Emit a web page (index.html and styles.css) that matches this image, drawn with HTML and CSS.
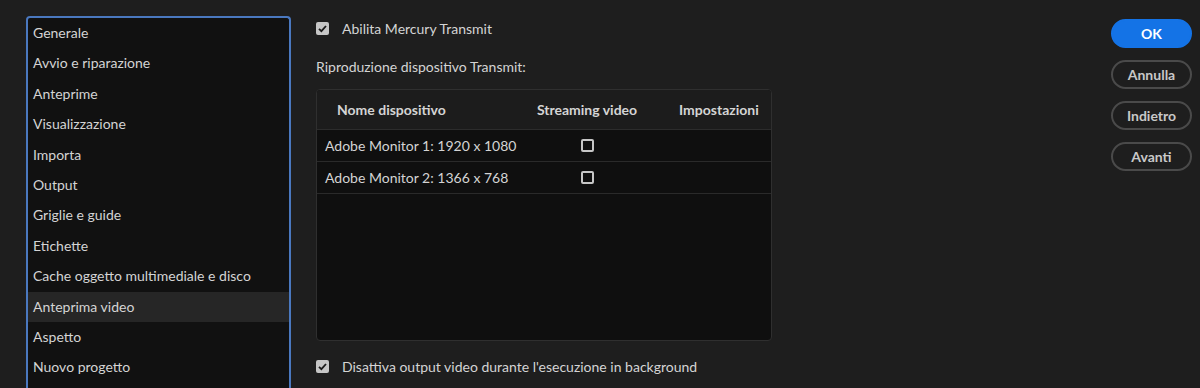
FILE: index.html
```html
<!DOCTYPE html>
<html lang="it">
<head>
    <meta charset="UTF-8">
    <title>Preferenze - Anteprima video</title>

    <link rel="stylesheet" href="styles.css">

</head>
<body>
<div class="dialog">
    <div class="sidebar">
        <div class="item">Generale</div>
        <div class="item">Avvio e riparazione</div>
        <div class="item">Anteprime</div>
        <div class="item">Visualizzazione</div>
        <div class="item">Importa</div>
        <div class="item">Output</div>
        <div class="item">Griglie e guide</div>
        <div class="item">Etichette</div>
        <div class="item">Cache oggetto multimediale e disco</div>
        <div class="item selected">Anteprima video</div>
        <div class="item">Aspetto</div>
        <div class="item">Nuovo progetto</div>
    </div>

    <div class="content">
        <label class="check-row top">
            <span class="checkbox checked">
                <svg viewBox="0 0 13 13" width="13" height="13"><path d="M3 6.8 L5.4 9.2 L10 4" fill="none" stroke="#1a1a1a" stroke-width="1.8"/></svg>
            </span>
            Abilita Mercury Transmit
        </label>

        <div class="section-label">Riproduzione dispositivo Transmit:</div>

        <div class="table">
            <div class="row head">
                <div class="col-name">Nome dispositivo</div>
                <div class="col-stream">Streaming video</div>
                <div class="col-set">Impostazioni</div>
            </div>
            <div class="row">
                <div class="col-name">Adobe Monitor 1: 1920 x 1080</div>
                <div class="col-stream"><span class="checkbox"></span></div>
                <div class="col-set"></div>
            </div>
            <div class="row">
                <div class="col-name">Adobe Monitor 2: 1366 x 768</div>
                <div class="col-stream"><span class="checkbox"></span></div>
                <div class="col-set"></div>
            </div>
        </div>

        <label class="check-row bottom">
            <span class="checkbox checked">
                <svg viewBox="0 0 13 13" width="13" height="13"><path d="M3 6.8 L5.4 9.2 L10 4" fill="none" stroke="#1a1a1a" stroke-width="1.8"/></svg>
            </span>
            Disattiva output video durante l'esecuzione in background
        </label>
    </div>

    <div class="buttons">
        <button class="btn primary">OK</button>
        <button class="btn">Annulla</button>
        <button class="btn">Indietro</button>
        <button class="btn">Avanti</button>
    </div>
</div>
</body>
</html>
```

FILE: styles.css
```css
* {
    box-sizing: border-box;
}

html, body {
    margin: 0;
    height: 100%;
    overflow: hidden;
}

body {
    background-color: #1e1e1e;
    color: #d4d4d4;
    font-family: Lato, "Open Sans", sans-serif;
    font-size: 14px;
}

.dialog {
    display: flex;
    align-items: flex-start;
    padding: 16px 8px 0 26px;
}

/* left category list, cut off by the window bottom */
.sidebar {
    width: 265px;
    height: 372px;
    flex: none;
    background-color: #111;
    border: 2px solid #4a78bf;
    border-bottom: none;
    border-radius: 4px 4px 0 0;
}

.sidebar .item {
    height: 30.4px;
    line-height: 30px;
    padding-left: 5px;
    white-space: nowrap;
}

.sidebar .item.selected {
    background-color: #262626;
}

/* main settings */
.content {
    width: 456px;
    margin-left: 25px;
    flex: none;
}

.check-row {
    display: flex;
    align-items: center;
    gap: 13px;
    height: 26px;
}

.check-row.top {
    margin-top: -1px;
}

.check-row.bottom {
    margin-top: 12px;
}

.checkbox {
    width: 13px;
    height: 13px;
    border: 2px solid #c6c6c6;
    border-radius: 2px;
    display: inline-block;
    flex: none;
}

.checkbox.checked {
    background-color: #c6c6c6;
    border: none;
}

.checkbox svg {
    display: block;
}

.section-label {
    margin-top: 13px;
    height: 26px;
    line-height: 26px;
}

.table {
    margin-top: 9px;
    height: 252px;
    background-color: #0f0f0f;
    border: 1px solid #2f2f2f;
    border-radius: 4px;
    overflow: hidden;
}

.table .row {
    display: grid;
    grid-template-columns: 210px 120px 1fr;
    align-items: center;
    height: 32px;
    border-bottom: 1px solid #2a2a2a;
}

.table .row.head {
    height: 40px;
    background-color: #1c1c1c;
    border-bottom: 1px solid #2c2c2c;
    font-weight: bold;
}

.table .col-name {
    padding-left: 8px;
    white-space: nowrap;
}

.table .head .col-name {
    padding-left: 20px;
}

.table .col-stream {
    display: flex;
    justify-content: center;
    white-space: nowrap;
}

.table .col-set {
    padding-left: 32px;
    white-space: nowrap;
}

/* dialog buttons */
.buttons {
    margin-left: auto;
    margin-top: 3px;
    display: flex;
    flex-direction: column;
    gap: 12px;
}

.btn {
    width: 81px;
    height: 29px;
    border-radius: 15px;
    border: 2px solid #4a4a4a;
    background: transparent;
    color: #c8c8c8;
    font-family: Lato, "Open Sans", sans-serif;
    font-size: 14px;
    font-weight: bold;
    padding: 0;
}

.btn.primary {
    background-color: #1473e6;
    border-color: #1473e6;
    color: #fff;
}
```
